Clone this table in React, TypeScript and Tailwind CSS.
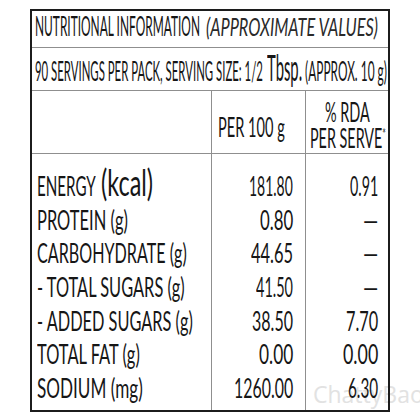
import { useLayoutEffect, useRef, useState } from "react";

const font = { fontFamily: "Lato, 'Open Sans', sans-serif" };

type FitProps = {
  children: React.ReactNode;
  className?: string;
};

// The label is set in a condensed face we don't have, so squeeze Lato
// horizontally until each piece of text fills the width it has in the print.
const Fit = ({ children, className = "" }: FitProps) => {
  const box = useRef<HTMLSpanElement>(null);
  const txt = useRef<HTMLSpanElement>(null);
  const [k, setK] = useState(1);

  useLayoutEffect(() => {
    const fit = () => {
      if (box.current && txt.current && txt.current.offsetWidth > 0) {
        setK(box.current.clientWidth / txt.current.offsetWidth);
      }
    };
    fit();
    document.fonts?.ready.then(fit);
  }, []);

  return (
    <span ref={box} className={`inline-block whitespace-nowrap ${className}`}>
      <span
        ref={txt}
        className="inline-block w-max whitespace-nowrap origin-left"
        style={{ transform: `scaleX(${k})` }}
      >
        {children}
      </span>
    </span>
  );
};

type Row = {
  label: string;
  labelW: string;
  unit?: string;
  per100: string;
  per100W: string;
  rda: string;
  rdaW: string;
};

const rows: Row[] = [
  { label: "ENERGY", labelW: "w-[59px]", unit: "(kcal)", per100: "181.80", per100W: "w-[44px]", rda: "0.91", rdaW: "w-[28px]" },
  { label: "PROTEIN (g)", labelW: "w-[91px]", per100: "0.80", per100W: "w-[33px]", rda: "—", rdaW: "w-[15px]" },
  { label: "CARBOHYDRATE (g)", labelW: "w-[150px]", per100: "44.65", per100W: "w-[42px]", rda: "—", rdaW: "w-[15px]" },
  { label: "- TOTAL SUGARS (g)", labelW: "w-[148px]", per100: "41.50", per100W: "w-[37px]", rda: "—", rdaW: "w-[15px]" },
  { label: "- ADDED SUGARS (g)", labelW: "w-[156px]", per100: "38.50", per100W: "w-[41px]", rda: "7.70", rdaW: "w-[32px]" },
  { label: "TOTAL FAT (g)", labelW: "w-[103px]", per100: "0.00", per100W: "w-[34px]", rda: "0.00", rdaW: "w-[35px]" },
  { label: "SODIUM (mg)", labelW: "w-[106px]", per100: "1260.00", per100W: "w-[59px]", rda: "6.30", rdaW: "w-[30px]" },
];

export default function App() {
  return (
    <div
      className="w-[420px] h-[420px] bg-white relative overflow-hidden text-[#161616]"
      style={font}
    >
      {/* watermark */}
      <div className="absolute left-[313px] top-[383px] text-[23px] leading-none text-[#e2e2e2] whitespace-nowrap font-['Open_Sans',sans-serif]">
        ChattyBao
      </div>

      <div className="relative ml-[30px] mt-[9px] w-[360px] h-[403px] border-2 border-[#1c1c1c] flex flex-col">
        {/* title */}
        <div className="h-[37px] shrink-0 border-b border-[#8f8f8f] pl-[3px] whitespace-nowrap text-[26px] leading-[30px]">
          <Fit className="w-[165px]">NUTRITIONAL INFORMATION</Fit>
          <Fit className="w-[172px] ml-[6px] italic text-[#2a2a2a]">(APPROXIMATE VALUES)</Fit>
        </div>

        {/* serving size */}
        <div className="h-[43px] shrink-0 border-b border-[#8f8f8f] pl-[3px] pt-[8px] whitespace-nowrap text-[26px] leading-[30px]">
          <Fit className="w-[228px]">90 SERVINGS PER PACK, SERVING SIZE: 1/2</Fit>
          <Fit className="w-[35px] ml-[4px] text-[36px] leading-[20px]">Tbsp.</Fit>
          <Fit className="w-[82px] ml-[3px]">(APPROX. 10 g)</Fit>
        </div>

        {/* column headers */}
        <div className="h-[63px] shrink-0 border-b border-[#8f8f8f] grid grid-cols-[180px_94px_1fr] text-[27px] leading-[26px]">
          <div className="border-r border-[#8f8f8f]" />
          <div className="border-r border-[#8f8f8f] pl-[6px] pt-[23px] whitespace-nowrap">
            <Fit className="w-[67px]">PER 100 g</Fit>
          </div>
          <div className="flex flex-col pt-[8px] whitespace-nowrap">
            <div className="pl-[19px]">
              <Fit className="w-[45px]">% RDA</Fit>
            </div>
            <div className="pl-[4px]">
              <Fit className="w-[76px]">
                PER SERVE<span className="relative -top-[9px] text-[16px]">*</span>
              </Fit>
            </div>
          </div>
        </div>

        {/* values */}
        <div className="flex-1 grid grid-cols-[180px_94px_1fr] text-[27px] leading-[33.7px]">
          <div className="border-r border-[#8f8f8f] pt-[15px] pl-[5px]">
            {rows.map((r) => (
              <div key={r.label} className="h-[33.7px] whitespace-nowrap">
                <Fit className={r.labelW}>{r.label}</Fit>
                {r.unit && (
                  <Fit className="w-[52px] ml-[5px] text-[36px] leading-[20px]">{r.unit}</Fit>
                )}
              </div>
            ))}
          </div>
          <div className="border-r border-[#8f8f8f] pt-[15px] pr-[12px]">
            {rows.map((r) => (
              <div key={r.label} className="h-[33.7px] flex justify-end whitespace-nowrap">
                <Fit className={r.per100W}>{r.per100}</Fit>
              </div>
            ))}
          </div>
          <div className="pt-[15px] pr-[10px]">
            {rows.map((r) => (
              <div key={r.label} className="h-[33.7px] flex justify-end whitespace-nowrap">
                <Fit className={r.rdaW}>{r.rda}</Fit>
              </div>
            ))}
          </div>
        </div>
      </div>
    </div>
  );
}
